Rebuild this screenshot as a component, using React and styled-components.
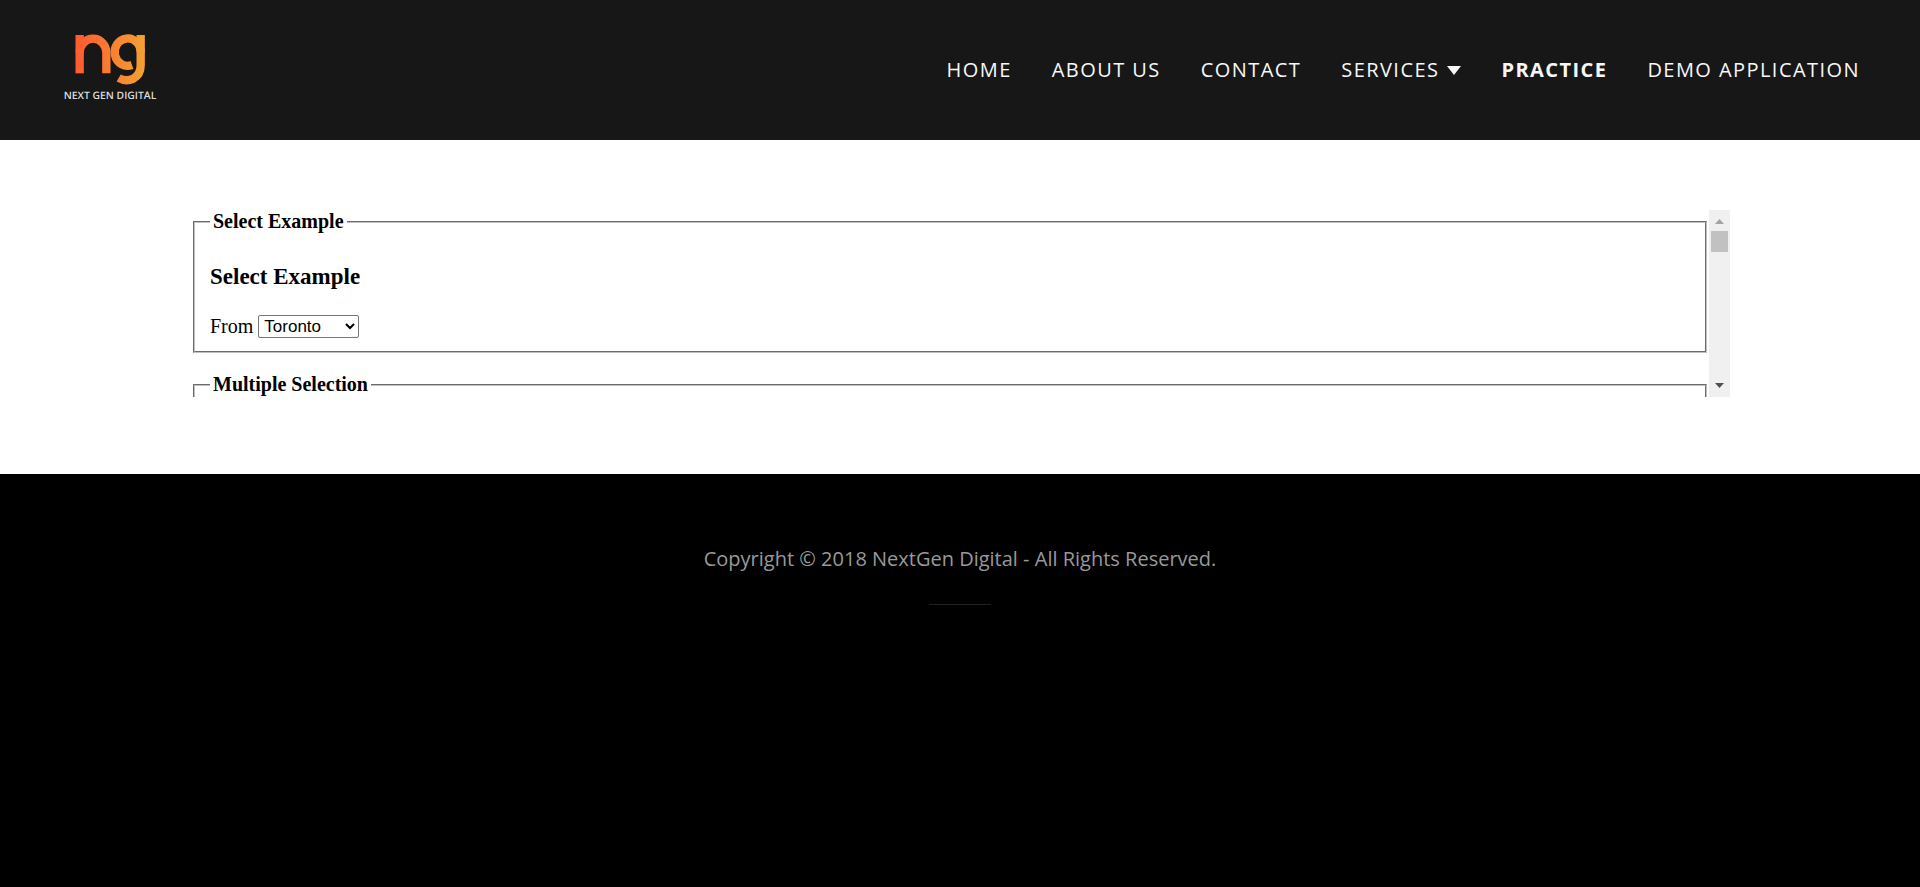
import React from "react";
import styled, { createGlobalStyle } from "styled-components";

const GlobalStyle = createGlobalStyle`
  *, *::before, *::after { box-sizing: border-box; }
  body {
    margin: 0;
    background: #000;
    font-family: "Open Sans", Arial, sans-serif;
    font-size: 20px;
  }
`;

const Header = styled.header`
  display: flex;
  align-items: flex-start;
  justify-content: space-between;
  min-height: 140px;
  padding: 32px 60px 36px 62px;
  background: #171717;
`;

const LogoLink = styled.a`
  display: block;
  line-height: 0;
`;

const NavList = styled.ul`
  display: flex;
  gap: 40px;
  margin: 0;
  padding: 24px 0 0;
  list-style: none;
`;

const NavLink = styled.a`
  display: flex;
  align-items: center;
  gap: 8px;
  color: #f7f7f7;
  font-weight: ${({ $active }) => ($active ? 700 : 400)};
  line-height: 28px;
  letter-spacing: 0.072em;
  text-decoration: none;
  text-transform: uppercase;
  white-space: nowrap;
`;

const Main = styled.main`
  padding: 70px 190px 77px;
  background: #fff;
`;

const Frame = styled.section`
  display: flex;
  height: 187px;
  color: #000;
  font-family: "Liberation Serif", "Times New Roman", serif;
`;

const FrameContent = styled.div`
  flex: 1;
  overflow-y: scroll;
  scrollbar-width: none;
`;

const Group = styled.fieldset`
  margin: 0 2px 20px 3px;
  padding: 7px 15px 13px;
  border: 2px groove #c0c0c0;
`;

const Legend = styled.legend`
  padding: 0 3px;
  font-weight: 700;
  line-height: 23px;
`;

const GroupTitle = styled.h3`
  margin: 24px 0;
  font-size: 23px;
  line-height: 26px;
`;

const Field = styled.div`
  display: flex;
  align-items: center;
  gap: 5px;
  line-height: 24px;
`;

const Select = styled.select`
  width: 101px;
  height: 23px;
  padding: 0 0 0 1px;
  border: 1px solid #767676;
  border-radius: 2px;
  background: #fff;
  color: #000;
  font-family: "Liberation Sans", Arial, sans-serif;
  font-size: 17px;
`;

const ScrollTrack = styled.div`
  display: flex;
  flex-direction: column;
  align-items: center;
  width: 21px;
  background: #f0f0f0;
`;

const ScrollArrow = styled.svg`
  width: 21px;
  height: 21px;
  fill: ${({ $muted }) => ($muted ? "#a3a3a3" : "#505050")};
`;

const ScrollThumb = styled.div`
  width: 17px;
  height: 21px;
  margin-bottom: auto;
  background: #c1c1c1;
`;

const Footer = styled.footer`
  display: flex;
  flex-direction: column;
  align-items: center;
  gap: 30px;
  padding: 70px 24px;
  background: #000;
  color: #999;
`;

const Copyright = styled.p`
  margin: 0;
  line-height: 30px;
`;

const Divider = styled.hr`
  width: 62px;
  margin: 0;
  border: 0;
  border-top: 1px solid #222;
`;

const LINKS = [
  { label: "Home" },
  { label: "About Us" },
  { label: "Contact" },
  { label: "Services", menu: true },
  { label: "Practice", active: true },
  { label: "Demo Application" },
];

function Logo() {
  return (
    <svg width="96" height="70" viewBox="36 36 288 210" role="img" aria-label="Next Gen Digital">
      <defs>
        <linearGradient id="logo-fill" gradientUnits="userSpaceOnUse" x1="76" y1="0" x2="286" y2="0">
          <stop offset="0" stopColor="#ff5a30" />
          <stop offset="1" stopColor="#f3a233" />
        </linearGradient>
      </defs>
      <g fill="none" stroke="url(#logo-fill)" strokeWidth="25">
        <path d="M89 160V45" />
        <path d="M89 98A40 42 0 0 1 169 98V160" />
        <path d="M246 135A39 41 0 1 1 272 97" />
        <path d="M272 45V136C272 176 234 190 206 174" />
      </g>
      <text
        x="180"
        y="237"
        textAnchor="middle"
        textRendering="geometricPrecision"
        fill="#ddd"
        fontFamily="Open Sans, sans-serif"
        fontSize="31"
        fontWeight="600"
      >
        NEXT GEN DIGITAL
      </text>
    </svg>
  );
}

function Caret() {
  return (
    <svg width="14" height="9" viewBox="0 0 14 9" fill="#f7f7f7" aria-hidden="true">
      <path d="M0 0H14L7 9Z" />
    </svg>
  );
}

export default function App() {
  return (
    <>
      <GlobalStyle />
      <Header>
        <LogoLink href="#home">
          <Logo />
        </LogoLink>
        <nav aria-label="Main">
          <NavList>
            {LINKS.map(({ label, menu, active }) => (
              <li key={label}>
                <NavLink href="#" $active={active} aria-current={active ? "page" : undefined}>
                  {label}
                  {menu && <Caret />}
                </NavLink>
              </li>
            ))}
          </NavList>
        </nav>
      </Header>
      <Main>
        <Frame>
          <FrameContent>
            <Group>
              <Legend>Select Example</Legend>
              <GroupTitle>Select Example</GroupTitle>
              <Field>
                <label htmlFor="from-city">From</label>
                <Select id="from-city" defaultValue="Toronto">
                  <option>Toronto</option>
                </Select>
              </Field>
            </Group>
            <Group>
              <Legend>Multiple Selection</Legend>
            </Group>
          </FrameContent>
          <ScrollTrack aria-hidden="true">
            <ScrollArrow $muted viewBox="0 0 21 21">
              <path d="M6 14L10.500 9L15 14Z" />
            </ScrollArrow>
            <ScrollThumb />
            <ScrollArrow viewBox="0 0 21 21">
              <path d="M6 7L10.500 12L15 7Z" />
            </ScrollArrow>
          </ScrollTrack>
        </Frame>
      </Main>
      <Footer>
        <Copyright>Copyright © 2018 NextGen Digital - All Rights Reserved.</Copyright>
        <Divider />
      </Footer>
    </>
  );
}
